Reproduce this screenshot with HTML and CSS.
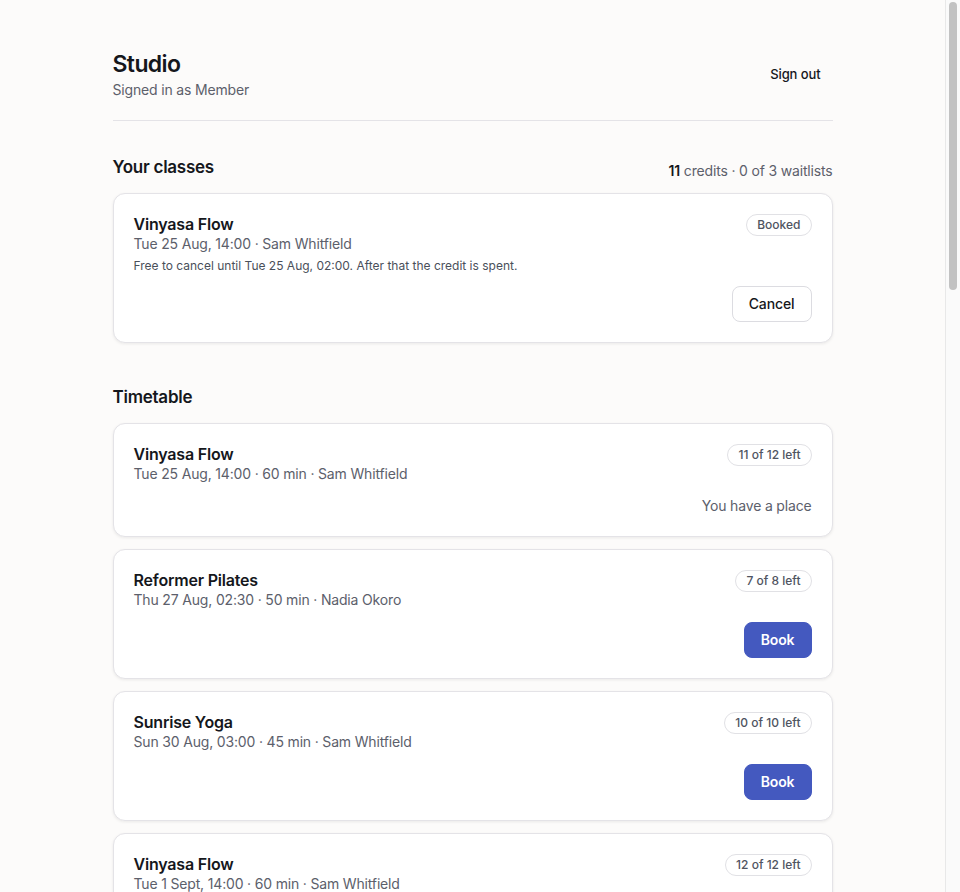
FILE: index.html
```html
<!DOCTYPE html>
<html lang="en">
<head>
<meta charset="utf-8">
<title>Studio</title>
<link rel="stylesheet" href="styles.css">
</head>
<body>
<div class="scrollbar" aria-hidden="true"><div class="scrollbar-thumb"></div></div>
<main class="page">
  <header class="top">
    <div class="brand">
      <h1 class="brand-title">Studio</h1>
      <p class="brand-sub">Signed in as Member</p>
    </div>
    <button class="btn-ghost" type="button">Sign out</button>
  </header>

  <section class="section section-first">
    <div class="section-head">
      <h2 class="section-title">Your classes</h2>
      <p class="section-meta"><strong>11</strong> credits · 0 of 3 waitlists</p>
    </div>
    <div class="list">
      <article class="card">
        <div class="card-top">
          <div class="card-info">
            <h3 class="card-title">Vinyasa Flow</h3>
            <p class="card-sub">Tue 25 Aug, 14:00 · Sam Whitfield</p>
            <p class="card-note">Free to cancel until Tue 25 Aug, 02:00. After that the credit is spent.</p>
          </div>
          <span class="badge">Booked</span>
        </div>
        <div class="card-actions">
          <button class="btn-outline" type="button">Cancel</button>
        </div>
      </article>
    </div>
  </section>

  <section class="section">
    <div class="section-head">
      <h2 class="section-title">Timetable</h2>
    </div>
    <div class="list">
      <article class="card">
        <div class="card-top">
          <div class="card-info">
            <h3 class="card-title">Vinyasa Flow</h3>
            <p class="card-sub">Tue 25 Aug, 14:00 · 60 min · Sam Whitfield</p>
          </div>
          <span class="badge">11 of 12 left</span>
        </div>
        <div class="card-actions">
          <span class="status">You have a place</span>
        </div>
      </article>

      <article class="card">
        <div class="card-top">
          <div class="card-info">
            <h3 class="card-title">Reformer Pilates</h3>
            <p class="card-sub">Thu 27 Aug, 02:30 · 50 min · Nadia Okoro</p>
          </div>
          <span class="badge">7 of 8 left</span>
        </div>
        <div class="card-actions">
          <button class="btn-primary" type="button">Book</button>
        </div>
      </article>

      <article class="card">
        <div class="card-top">
          <div class="card-info">
            <h3 class="card-title">Sunrise Yoga</h3>
            <p class="card-sub">Sun 30 Aug, 03:00 · 45 min · Sam Whitfield</p>
          </div>
          <span class="badge">10 of 10 left</span>
        </div>
        <div class="card-actions">
          <button class="btn-primary" type="button">Book</button>
        </div>
      </article>

      <article class="card">
        <div class="card-top">
          <div class="card-info">
            <h3 class="card-title">Vinyasa Flow</h3>
            <p class="card-sub">Tue 1 Sept, 14:00 · 60 min · Sam Whitfield</p>
          </div>
          <span class="badge">12 of 12 left</span>
        </div>
        <div class="card-actions">
          <button class="btn-primary" type="button">Book</button>
        </div>
      </article>

      <article class="card">
        <div class="card-top">
          <div class="card-info">
            <h3 class="card-title">Reformer Pilates</h3>
            <p class="card-sub">Thu 3 Sept, 02:30 · 50 min · Nadia Okoro</p>
          </div>
          <span class="badge">8 of 8 left</span>
        </div>
        <div class="card-actions">
          <button class="btn-primary" type="button">Book</button>
        </div>
      </article>
    </div>
  </section>
</main>
</body>
</html>
```

FILE: styles.css
```css
* { box-sizing: border-box; }

html, body {
  margin: 0;
  padding: 0;
  background: #fcfbfa;
}

body {
  font-family: Inter, "Noto Sans", "Liberation Sans", sans-serif;
  color: #15171c;
  -webkit-font-smoothing: antialiased;
  padding-right: 15px;
}

/* classic scrollbar gutter, drawn over the window edge */
.scrollbar {
  position: fixed;
  top: 0;
  right: 0;
  bottom: 0;
  width: 15px;
  background: #fafafa;
  border-left: 1px solid #e8e8e8;
  padding: 2px 3px 0 3px;
  z-index: 10;
}

.scrollbar-thumb {
  width: 8px;
  height: 288px;
  background: #c2c2c2;
  border-radius: 4px;
}

h1, h2, h3, p { margin: 0; }

.page {
  max-width: 720px;
  margin: 0 auto;
  padding: 48px 0 48px;
}

.top {
  display: flex;
  align-items: center;
  justify-content: space-between;
  padding-bottom: 20px;
  border-bottom: 1px solid #e4e3e7;
}

.brand-title {
  font-size: 23px;
  line-height: 32px;
  font-weight: 600;
  letter-spacing: -0.6px;
}

.brand-sub {
  font-size: 14px;
  line-height: 20px;
  color: #5c606b;
  letter-spacing: -0.17px;
}

.btn-ghost {
  font: inherit;
  font-size: 13px;
  font-weight: 500;
  line-height: 18px;
  letter-spacing: -0.1px;
  color: #15171c;
  background: transparent;
  border: 0;
  padding: 8px 12px;
  border-radius: 8px;
  cursor: pointer;
}

.section { margin-top: 40px; }
.section-first { margin-top: 32px; }

.section-head {
  display: flex;
  align-items: flex-end;
  justify-content: space-between;
  margin-bottom: 12px;
}

.section-title {
  font-size: 17px;
  line-height: 28px;
  font-weight: 600;
  letter-spacing: -0.25px;
}

.section-meta {
  font-size: 14px;
  line-height: 20px;
  color: #5c606b;
  letter-spacing: -0.17px;
}

.section-meta strong {
  color: #15171c;
  font-weight: 600;
}

.list {
  display: flex;
  flex-direction: column;
  gap: 12px;
}

.card {
  background: #ffffff;
  border: 1px solid #e4e3e7;
  border-radius: 12px;
  box-shadow: 0 1px 3px rgba(20, 20, 30, 0.08);
  padding: 20px;
}

.card-top {
  display: flex;
  justify-content: space-between;
  align-items: flex-start;
  gap: 16px;
}

.card-title {
  font-size: 16px;
  line-height: 20px;
  font-weight: 600;
  letter-spacing: -0.2px;
}

.card-sub {
  font-size: 14px;
  line-height: 20px;
  color: #5c606b;
  letter-spacing: -0.17px;
}

.card-note {
  margin-top: 4px;
  font-size: 12px;
  line-height: 16px;
  color: #4a4f5a;
}

.badge {
  flex: none;
  display: inline-block;
  font-size: 12px;
  line-height: 16px;
  font-weight: 500;
  color: #4f5461;
  border: 1px solid #e1e1e5;
  border-radius: 999px;
  padding: 2px 10px;
}

.card-actions {
  display: flex;
  justify-content: flex-end;
  align-items: center;
  margin-top: 12px;
}

.status {
  font-size: 14px;
  line-height: 20px;
  color: #5c606b;
  letter-spacing: -0.17px;
}

.btn-outline,
.btn-primary {
  font: inherit;
  font-size: 14px;
  line-height: 18px;
  font-weight: 500;
  letter-spacing: -0.1px;
  padding: 8px 16px;
  border-radius: 8px;
  cursor: pointer;
}

.btn-outline {
  color: #15171c;
  background: #ffffff;
  border: 1px solid #dcdce1;
}

.btn-primary {
  color: #ffffff;
  background: #4459bf;
  border: 1px solid #4459bf;
  font-weight: 600;
}
```
